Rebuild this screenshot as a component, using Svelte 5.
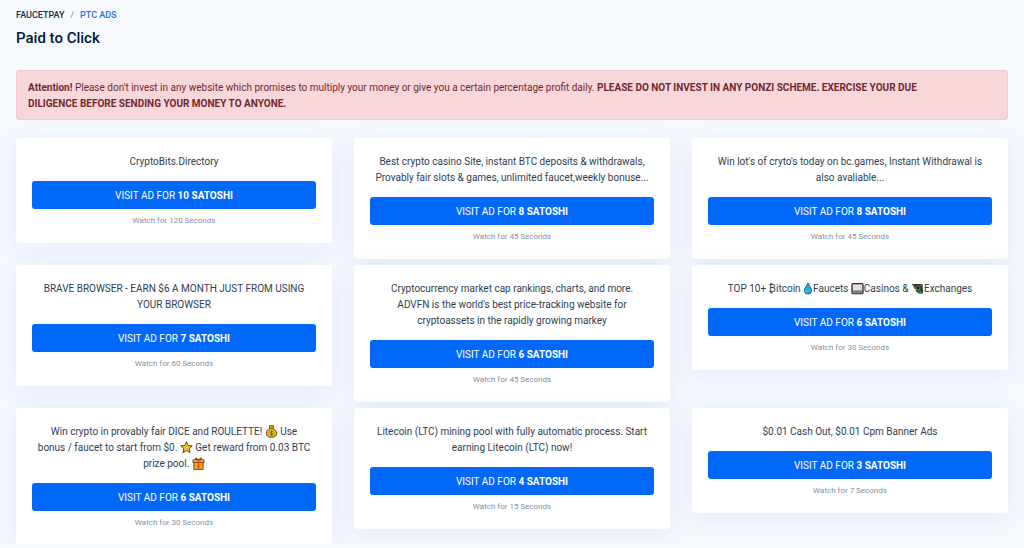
<script>
  // a newline in a text is a line break on the card
  const ads = [
    { text: ['CryptoBits.Directory'], reward: 10, seconds: 120 },
    { text: ['Best crypto casino Site, instant BTC deposits & withdrawals,\nProvably fair slots & games, unlimited faucet,weekly bonuse...'], reward: 8, seconds: 45 },
    { text: ["Win lot's of cryto's today on bc.games, Instant Withdrawal is\nalso avaliable..."], reward: 8, seconds: 45 },
    { text: ['BRAVE BROWSER - EARN $6 A MONTH JUST FROM USING\nYOUR BROWSER'], reward: 7, seconds: 60 },
    { text: ["Cryptocurrency market cap rankings, charts, and more.\nADVFN is the world's best price-tracking website for\ncryptoassets in the rapidly growing markey"], reward: 6, seconds: 45 },
    { text: ['TOP 10+ ₿itcoin ', { icon: 'drop' }, 'Faucets ', { icon: 'slot' }, 'Casinos & ', { icon: 'exchange' }, 'Exchanges'], reward: 6, seconds: 30 },
    { text: ['Win crypto in provably fair DICE and ROULETTE! ', { icon: 'bag' }, ' Use\nbonus / faucet to start from $0. ', { icon: 'star' }, ' Get reward from 0.03 BTC\nprize pool. ', { icon: 'gift' }], reward: 6, seconds: 30 },
    { text: ['Litecoin (LTC) mining pool with fully automatic process. Start\nearning Litecoin (LTC) now!'], reward: 4, seconds: 15 },
    { text: ['$0.01 Cash Out, $0.01 Cpm Banner Ads'], reward: 3, seconds: 7 }
  ];
</script>

{#snippet emoji(name)}
  {#if name === 'drop'}
    <svg class="emoji narrow" viewBox="0 0 10 14" aria-hidden="true">
      <path d="M5 1.2C4.3 3.6 1.2 6.6 1.2 9.2a3.8 3.8 0 0 0 7.6 0C8.8 6.6 5.7 3.6 5 1.2z" fill="#19b5ea" stroke="#17495c" />
      <path d="M3 8.4c-.4 1.6.2 2.6 1.2 3.1" fill="none" stroke="#8be4ff" />
    </svg>
  {:else if name === 'slot'}
    <svg class="emoji" viewBox="0 0 14 14" aria-hidden="true">
      <rect x="1" y="1.6" width="12" height="11" rx="1.4" fill="#99908f" stroke="#302c30" stroke-width="1.2" />
      <rect x="2.2" y="3" width="9.6" height="5.8" fill="#efe8e5" />
      <path d="M5.4 3.4v5.2M8.6 3.4v5.2" stroke="#d4cac7" stroke-width=".6" />
      <path d="M3.4 5h1.2l-.6 2M6.5 5h1.2l-.6 2M9.5 5h1.2l-.6 2" fill="none" stroke="#d9b3b1" stroke-width=".7" />
      <path d="M3 10.6h8" stroke="#6b6467" />
    </svg>
  {:else if name === 'exchange'}
    <svg class="emoji" viewBox="0 0 14 14" aria-hidden="true">
      <path d="M1 2l8 1-.4 5-4.6-.4z" fill="#2c2926" />
      <path d="M4 2.5l8.5-.4v6l-7.500.8z" fill="#1b2a20" />
      <path d="M1.4 2.5l3 2.6M2.6 5l2.600 2" stroke="#8b7168" stroke-width="1.1" />
      <path d="M5.500 7l7.500.6v4.400L9.500 13 5.500 10.400z" fill="#26502c" />
      <circle cx="7.600" cy="6.400" r="2.200" fill="#0b0e0c" stroke="#a9bbae" stroke-width=".8" />
      <path d="M9.800 3.600l2-.2M8.500 10.500l3.200 1" stroke="#4aa853" stroke-width="1.200" />
    </svg>
  {:else if name === 'bag'}
    <svg class="emoji" viewBox="0 0 14 14" aria-hidden="true">
      <path d="M4.6.8h4.8L8.800 3.800c2.300 1 3.700 3 3.700 5.300 0 2.700-2.100 4.100-5.500 4.100S1.500 11.800 1.500 9.100c0-2.300 1.400-4.300 3.700-5.300z" fill="#e9b411" stroke="#594316" />
      <path d="M5 3.800h4" stroke="#8c5d12" />
      <path d="M8.600 7.100c-1-.8-3-.5-3 .6 0 1.300 3 .7 3 2 0 1.200-2 1.400-3.200.5M7 5.800v5.800" fill="none" stroke="#56702b" stroke-width=".9" />
    </svg>
  {:else if name === 'star'}
    <svg class="emoji" viewBox="0 0 14 14" aria-hidden="true">
      <path d="M7 .9l1.800 4 4.400.4-3.300 2.900 1 4.400L7 10.300l-3.900 2.300 1-4.400L.8 5.300l4.400-.4z" fill="#fbc02c" stroke="#4c4030" stroke-linejoin="round" />
    </svg>
  {:else if name === 'gift'}
    <svg class="emoji" viewBox="0 0 14 14" aria-hidden="true">
      <path d="M6.800 3C5.700 1 3.400.6 3.400 2c0 .8 1.400 1 3.400 1zM7.200 3c1.100-2 3.400-2.400 3.400-1 0 .8-1.400 1-3.400 1z" fill="#e6532b" stroke="#5b2c19" stroke-width=".8" />
      <path d="M2 5.600h10v7.800H2z" fill="#f8a51b" stroke="#603917" stroke-width=".9" />
      <path d="M1 3h12v2.900H1z" fill="#fbb72b" stroke="#603917" stroke-width=".9" />
      <path d="M6 3.200h2v9.800H6z" fill="#e04b28" />
    </svg>
  {/if}
{/snippet}

<main class="page">
  <nav class="breadcrumb" aria-label="Breadcrumb">
    <a class="crumb" href="#home">FaucetPay</a>
    <span class="divider">/</span>
    <a class="crumb active" href="#ptc" aria-current="page">PTC Ads</a>
  </nav>
  <h1 class="title">Paid to Click</h1>

  <div class="alert" role="alert">
    <strong>Attention!</strong> Please don't invest in any website which promises to multiply your money or give you a certain percentage profit daily. <strong>PLEASE DO NOT INVEST IN ANY PONZI SCHEME. EXERCISE YOUR DUE<br />DILIGENCE BEFORE SENDING YOUR MONEY TO ANYONE.</strong>
  </div>

  <div class="ads">
    {#each ads as ad}
      <article class="card">
        <p class="text">{#each ad.text as part}{#if part.icon}{@render emoji(part.icon)}{:else}{part}{/if}{/each}</p>
        <button class="visit" type="button">VISIT AD FOR <b>{ad.reward} SATOSHI</b></button>
        <small class="watch">Watch for {ad.seconds} Seconds</small>
      </article>
    {/each}
  </div>
</main>

<style>
  :global(body) {
    background: #f6f9fe;
    color: #2f3e50;
    font-family: Roboto, "Liberation Sans", sans-serif;
    font-size: 10px;
    line-height: 16px;
  }

  .page {
    padding: 8px 16px 0;
  }

  .breadcrumb {
    display: flex;
    gap: 6px;
    font-size: 9px;
    font-weight: 500;
    line-height: 14px;
    text-transform: uppercase;
  }

  .crumb {
    color: #1b2e4b;
    text-decoration: none;
  }

  .crumb.active {
    color: #2a6ee0;
  }

  .divider {
    color: #8392a5;
  }

  .title {
    margin: 6px 0 22px;
    color: #001737;
    font-size: 15px;
    font-weight: 500;
    line-height: 20px;
  }

  .alert {
    margin-bottom: 18px;
    padding: 9px 11px 7px;
    border: 1px solid #f5c6cb;
    border-radius: 3px;
    background: #f8d7da;
    color: #72282e;
  }

  .alert strong {
    font-weight: 700;
  }

  .ads {
    display: grid;
    grid-template-columns: repeat(3, minmax(0, 1fr));
    align-items: start;
    gap: 6px 22px;
  }

  .card {
    display: flex;
    flex-direction: column;
    padding: 16px 16px 15px;
    border-radius: 3px;
    background: #fff;
    box-shadow: 0 4px 24px rgba(60, 120, 240, 0.1);
    text-align: center;
  }

  .text {
    margin: 0 0 11px;
    white-space: pre-line;
  }

  .emoji {
    width: 13px;
    height: 13px;
    margin: -1px 0;
    vertical-align: -2px;
  }

  .emoji.narrow {
    width: 10px;
  }

  .visit {
    height: 28px;
    padding: 1px 12px 0;
    border: 0;
    border-radius: 3px;
    background: #0168fa;
    color: #fff;
    font: inherit;
    cursor: pointer;
  }

  .watch {
    margin-top: 4px;
    color: #8490a2;
    font-size: 8px;
    line-height: 15px;
  }
</style>
